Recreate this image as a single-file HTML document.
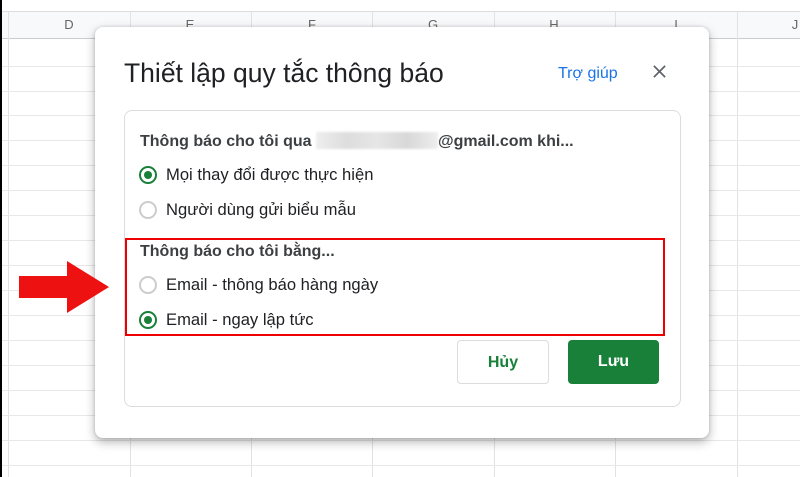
<!DOCTYPE html>
<html><head><meta charset="utf-8"><style>
*{margin:0;padding:0;box-sizing:border-box}
body{width:800px;height:477px;background:#fff;position:relative;overflow:hidden;font-family:"Liberation Sans",Arial,sans-serif}
.lb{position:absolute;left:0;top:0;width:2px;height:477px;background:#000}
.hdr{position:absolute;left:0;top:11px;width:800px;height:28px;background:#f8f9fa;border-bottom:1px solid #ccc;border-top:1px solid #ddd}
.col{position:absolute;top:11px;height:466px;width:1px;background:#e2e2e2}
.row{position:absolute;left:0;width:800px;height:1px;background:#e8e8e8}
.hl{position:absolute;top:17px;font-size:13px;color:#666;width:20px;text-align:center}
.dlg{position:absolute;left:95px;top:27px;width:614px;height:411px;background:#fff;border-radius:8px;box-shadow:0 4px 10px rgba(0,0,0,.3),0 0 3px rgba(0,0,0,.15)}
.title{position:absolute;left:29px;top:31px;font-size:26.5px;color:#202124}
.help{position:absolute;left:463px;top:38px;font-size:16px;color:#1a73e8}
.x{position:absolute;left:557px;top:37px}
.box{position:absolute;left:29px;top:83px;width:557px;height:297px;border:1px solid #dadce0;border-radius:8px}
.t{position:absolute;font-size:16.6px;color:#202124}
.b{font-weight:bold;color:#3c4043;font-size:16px}
.r{position:absolute;width:18px;height:18px;border-radius:50%;border:2px solid #ccc}
.r.on{border-color:#188038}
.r.on::after{content:"";position:absolute;left:3px;top:3px;width:8px;height:8px;border-radius:50%;background:#188038}
.red{position:absolute;left:125px;top:238px;width:540px;height:98px;border:2px solid #e00}
.btn{position:absolute;top:340px;height:44px;border-radius:4px;font-size:16px;font-weight:bold;text-align:center;line-height:44px}
</style></head><body>
<div class="hdr"></div>
<div class="col" style="left:8px"></div><div class="col" style="left:130px"></div><div class="col" style="left:251px"></div><div class="col" style="left:372px"></div><div class="col" style="left:494px"></div><div class="col" style="left:615px"></div><div class="col" style="left:737px"></div>
<div class="row" style="top:66px"></div><div class="row" style="top:91px"></div><div class="row" style="top:115px"></div><div class="row" style="top:140px"></div><div class="row" style="top:165px"></div><div class="row" style="top:190px"></div><div class="row" style="top:215px"></div><div class="row" style="top:240px"></div><div class="row" style="top:265px"></div><div class="row" style="top:290px"></div><div class="row" style="top:315px"></div><div class="row" style="top:340px"></div><div class="row" style="top:365px"></div><div class="row" style="top:390px"></div><div class="row" style="top:415px"></div><div class="row" style="top:440px"></div><div class="row" style="top:465px"></div>
<div class="lb"></div>
<div class="hl" style="left:59px">D</div><div class="hl" style="left:180px">E</div><div class="hl" style="left:302px">F</div><div class="hl" style="left:423px">G</div><div class="hl" style="left:544px">H</div><div class="hl" style="left:666px">I</div><div class="hl" style="left:785px">J</div>
<div class="dlg">
<div class="title">Thiết lập quy tắc thông báo</div>
<div class="help">Trợ giúp</div>
<svg class="x" width="15" height="15" viewBox="0 0 16 16"><path d="M2 2L14 14M14 2L2 14" stroke="#5f6368" stroke-width="1.8"/></svg>
<div class="box"></div>
</div>
<div class="t b" style="left:140px;top:132px">Thông báo cho tôi qua <span style="display:inline-block;width:122px;height:17px;background:linear-gradient(90deg,#eee,#ddd,#e6e6e6,#d8d8d8,#eee);vertical-align:-3px;filter:blur(1px)"></span>@gmail.com khi...</div>
<div class="r on" style="left:139px;top:166px"></div><div class="t" style="left:166px;top:165px">Mọi thay đổi được thực hiện</div>
<div class="r" style="left:139px;top:201px"></div><div class="t" style="left:166px;top:200px">Người dùng gửi biểu mẫu</div>
<div class="t b" style="left:140px;top:243px">Thông báo cho tôi bằng...</div>
<div class="r" style="left:139px;top:276px"></div><div class="t" style="left:166px;top:275px">Email - thông báo hàng ngày</div>
<div class="r on" style="left:139px;top:311px"></div><div class="t" style="left:166px;top:310px">Email - ngay lập tức</div>
<div class="red"></div>
<div class="btn" style="left:457px;width:92px;border:1px solid #dadce0;color:#188038">Hủy</div>
<div class="btn" style="left:568px;width:91px;background:#188038;color:#fff">Lưu</div>
<svg style="position:absolute;left:19px;top:261px" width="90" height="52" viewBox="0 0 90 52"><path d="M0 15H48V0L90 26L48 52V37H0Z" fill="#ee1111"/></svg>
</body></html>
